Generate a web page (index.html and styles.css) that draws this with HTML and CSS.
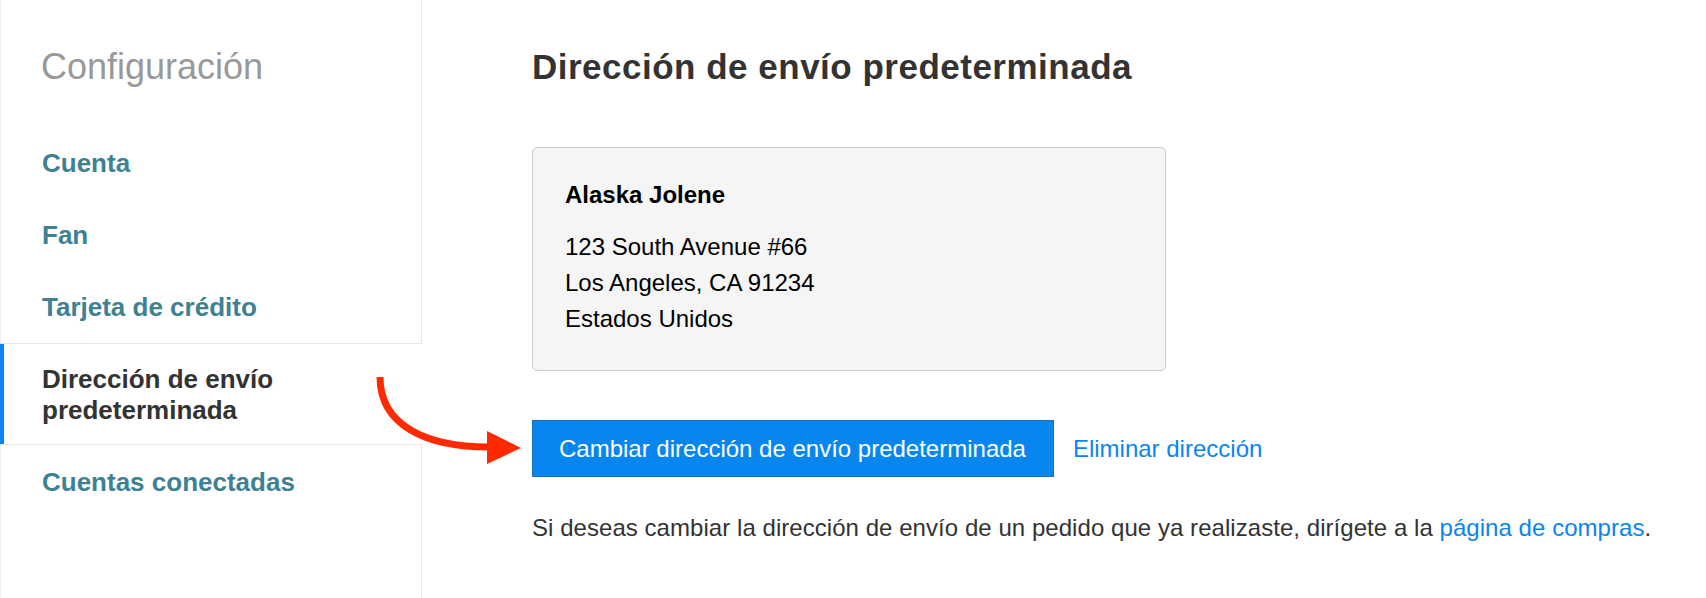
FILE: index.html
```html
<!DOCTYPE html>
<html lang="es">

<head>
  <meta charset="UTF-8">
  <meta name="viewport" content="width=device-width, initial-scale=1.0">
  <title>Configuración</title>
  <link rel="stylesheet" href="styles.css">
</head>

<body>
  <div class="wrapper">
    <aside class="sidebar">
      <h2 class="sidebarTitle">Configuración</h2>
      <nav class="navList">
        <a class="navItem" href="#">Cuenta</a>
        <a class="navItem" href="#">Fan</a>
        <a class="navItem" href="#">Tarjeta de crédito</a>
        <a class="navItem active" href="#">Dirección de envío predeterminada</a>
        <a class="navItem" href="#">Cuentas conectadas</a>
      </nav>
    </aside>

    <main class="content">
      <h1>Dirección de envío predeterminada</h1>

      <div class="addressCard">
        <p class="addressName">Alaska Jolene</p>
        <p>123 South Avenue #66</p>
        <p>Los Angeles, CA 91234</p>
        <p>Estados Unidos</p>
      </div>

      <div class="actions">
        <button class="primaryButton" type="button">Cambiar dirección de envío predeterminada</button>
        <a class="textLink" href="#">Eliminar dirección</a>
      </div>

      <p class="note">Si deseas cambiar la dirección de envío de un pedido que ya realizaste, dirígete a la <a class="textLink" href="#">página de compras</a>.</p>
    </main>

    <!-- annotation arrow -->
    <svg class="annotation" width="1706" height="598" viewBox="0 0 1706 598">
      <path d="M380 377 C380 425 425 447 489 447" fill="none" stroke="#ff2a00" stroke-width="7" />
      <polygon points="487,431 521,448 487,464" fill="#ff2a00" />
    </svg>
  </div>
</body>

</html>
```

FILE: styles.css
```css
body {
  font-family: "Liberation Sans", Arial, sans-serif;
  margin: 0;
  padding: 0;
  background-color: #fff;
}

.wrapper {
  position: relative;
  display: flex;
  min-height: 598px;
}

/* Sidebar */
.sidebar {
  width: 422px;
  flex-shrink: 0;
  box-sizing: border-box;
  border-left: 1px solid #efefef;
  border-right: 1px solid #e6e6e6;
}

.sidebarTitle {
  margin: 0 0 40px;
  padding: 46px 0 0 40px;
  font-size: 36px;
  line-height: 42px;
  font-weight: normal;
  color: #999;
}

.navList {
  display: flex;
  flex-direction: column;
}

.navItem {
  display: block;
  padding: 20px 20px 21px 41px;
  font-size: 26px;
  line-height: 31px;
  font-weight: bold;
  color: #3d8193;
  text-decoration: none;
}

.navItem.active {
  margin: -1px -1px 0 -1px;
  padding: 20px 20px 18px 42px;
  color: #333;
  background-color: #fff;
  border-top: 1px solid #e6e6e6;
  border-bottom: 1px solid #e6e6e6;
  box-shadow: inset 4px 0 0 #0a84f0;
}

.navItem.active + .navItem {
  padding-top: 22px;
}

/* Main content */
.content {
  padding: 46px 0 0 110px;
}

h1 {
  margin: 0;
  font-size: 35px;
  line-height: 42px;
  letter-spacing: 0.5px;
  color: #333;
}

.addressCard {
  width: 634px;
  box-sizing: border-box;
  margin-top: 59px;
  padding: 29px 32px 33px;
  background-color: #f5f5f5;
  border: 1px solid #ccc;
  border-radius: 5px;
}

.addressCard p {
  margin: 0;
  font-size: 24px;
  line-height: 36px;
  color: #000;
}

.addressCard .addressName {
  margin-bottom: 16px;
  font-weight: bold;
}

.actions {
  display: flex;
  align-items: center;
  margin-top: 49px;
}

.primaryButton {
  height: 57px;
  padding: 0 27px 0 26px;
  font-family: inherit;
  font-size: 24px;
  color: #fff;
  background-color: #0886f0;
  border: 1px solid #1c6fb8;
  border-radius: 0;
  cursor: pointer;
}

.textLink {
  color: #0b85ee;
  text-decoration: none;
}

.actions .textLink {
  margin-left: 19px;
  font-size: 24px;
  line-height: 36px;
}

.note {
  margin: 33px 0 0;
  font-size: 24px;
  line-height: 36px;
  letter-spacing: 0.05px;
  color: #333;
}

.annotation {
  position: absolute;
  top: 0;
  left: 0;
  pointer-events: none;
}
```
